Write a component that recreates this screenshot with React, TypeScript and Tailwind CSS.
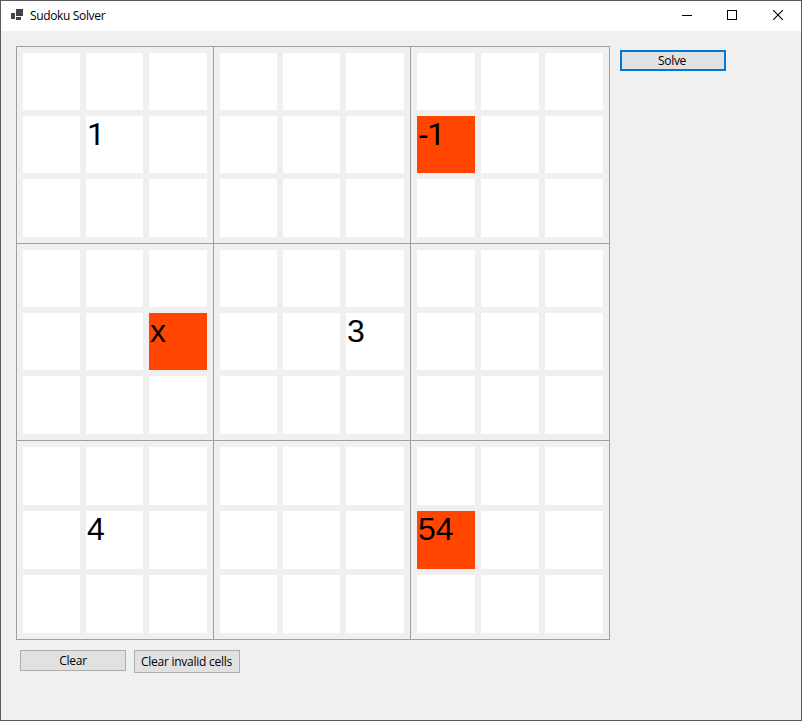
const values: Record<string, string> = {
  '0-4': '1',
  '2-3': '-1',
  '3-5': 'x',
  '4-5': '3',
  '6-4': '4',
  '8-3': '54',
};

const isInvalid = (value: string) => value !== '' && !/^[1-9]$/.test(value);

const blockColumns = [
  'grid-cols-[57px_57px_58px]',
  'grid-cols-[57px_57px_58px]',
  'grid-cols-[58px_58px_58px]',
];

const blockRows = [
  'grid-rows-[57px_57px_58px]',
  'grid-rows-[57px_57px_58px]',
  'grid-rows-[58px_58px_58px]',
];

function Cell({ value }: { value: string }) {
  // Roboto draws the "1" without a foot.
  const font = value.includes('1')
    ? "font-['Roboto','Liberation_Sans',sans-serif]"
    : "font-['Liberation_Sans',sans-serif]";
  return (
    <div
      className={`overflow-hidden pl-px text-[32px] leading-9 whitespace-nowrap text-black ${font} ${
        isInvalid(value) ? 'bg-[#ff4500]' : 'bg-white'
      }`}
    >
      {value.startsWith('-') ? (
        <>
          <span className="font-['Liberation_Sans',sans-serif] tracking-[-1.5px]">-</span>
          {value.slice(1)}
        </>
      ) : (
        value
      )}
    </div>
  );
}

function Block({ index }: { index: number }) {
  return (
    <div
      className={`grid gap-1.5 bg-[#f0f0f0] p-1.5 ${blockColumns[index % 3]} ${blockRows[Math.floor(index / 3)]}`}
    >
      {Array.from({ length: 9 }, (_, cell) => (
        <Cell key={cell} value={values[`${index}-${cell}`] ?? ''} />
      ))}
    </div>
  );
}

function TitleBar() {
  return (
    <header className="flex h-[30px] shrink-0 items-center bg-white pb-0.5 pl-2.5">
      <svg width="13" height="12" viewBox="0 0 13 12" fill="#424242" shapeRendering="crispEdges">
        <rect x="0" y="4" width="4" height="6" />
        <rect x="5" y="0" width="7" height="7" />
        <rect x="5" y="8" width="5" height="3" />
      </svg>
      <h1 className="mt-0.5 ml-1.5 flex-1 text-[12px] leading-4 tracking-[-0.35px]">Sudoku Solver</h1>
      <div className="flex h-full">
        <button aria-label="Minimize" className="flex h-full w-[46px] items-center justify-center">
          <svg width="10" height="10" shapeRendering="crispEdges">
            <rect x="0" y="5" width="10" height="1" />
          </svg>
        </button>
        <button aria-label="Maximize" className="flex h-full w-[45px] items-center justify-center pr-px">
          <svg width="10" height="10" fill="none" stroke="black" shapeRendering="crispEdges">
            <rect x="0.5" y="0.5" width="9" height="9" />
          </svg>
        </button>
        <button aria-label="Close" className="flex h-full w-[46px] items-center justify-center">
          <svg width="10" height="10" fill="none" stroke="black" strokeWidth="1.1">
            <path d="M0 0L10 10M10 0L0 10" />
          </svg>
        </button>
      </div>
    </header>
  );
}

export default function App() {
  return (
    <div className="flex h-[721px] w-[802px] flex-col border border-[#5a5a5a] bg-[#f0f0f0] font-['Open_Sans','Noto_Sans',sans-serif] text-black">
      <TitleBar />
      <main className="flex gap-2.5 pt-[15px] pl-[15px]">
        <div className="flex flex-col gap-2.5">
          <div className="grid grid-cols-[196px_196px_198px] gap-px border border-[#a0a0a0] bg-[#a0a0a0]">
            {Array.from({ length: 9 }, (_, index) => (
              <Block key={index} index={index} />
            ))}
          </div>
          <div className="flex items-start gap-2 pl-1 text-[12px] tracking-[-0.25px]">
            <button className="flex h-[21px] w-[106px] items-center justify-center border border-[#adadad] bg-[#e1e1e1]">
              Clear
            </button>
            <button className="flex h-[23px] w-[106px] items-center justify-center border border-[#adadad] bg-[#e1e1e1] pr-px whitespace-nowrap">
              Clear invalid cells
            </button>
          </div>
        </div>
        <button className="mt-1 flex h-[21px] w-[106px] items-center justify-center border-2 border-[#0078d7] bg-[#e1e1e1] pr-0.5 text-[12px] tracking-[-0.3px]">
          Solve
        </button>
      </main>
    </div>
  );
}
